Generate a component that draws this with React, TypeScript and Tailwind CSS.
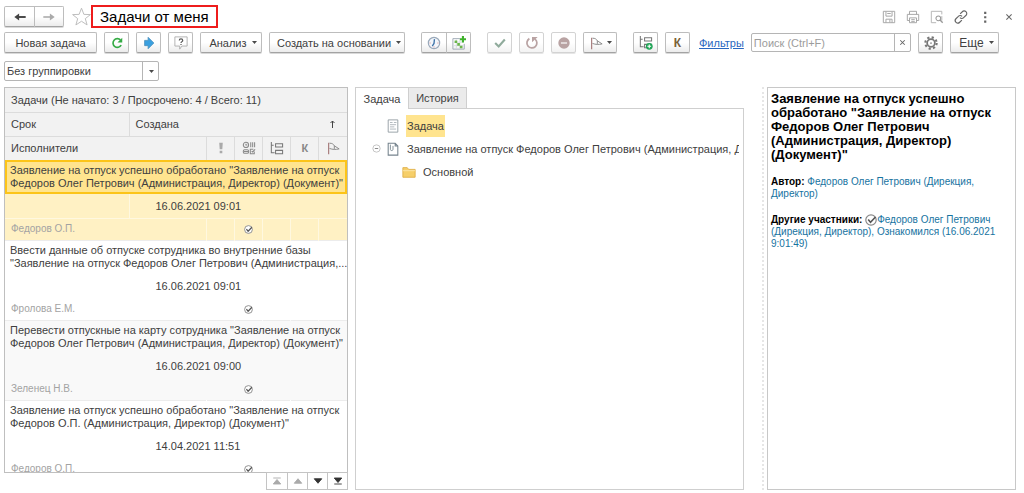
import type { ReactNode } from "react";

const BTN =
  "h-[21px] shrink-0 flex items-center justify-center rounded-[2px] border border-[#bdbdbd] border-b-[#a3a3a3] bg-gradient-to-b from-white from-50% to-[#ececec] shadow-[0_1px_0_#d9d9d9]";
const BTN_OFF =
  "h-[21px] w-[25px] shrink-0 flex items-center justify-center rounded-[2px] border border-[#d3d3d3] bg-gradient-to-b from-white from-50% to-[#f3f3f3] shadow-[0_1px_0_#e6e6e6]";

const TASKS = [
  {
    title: 'Заявление на отпуск успешно обработано "Заявление на отпуск\nФедоров Олег Петрович (Администрация, Директор) (Документ)"',
    created: "16.06.2021 09:01",
    who: "Федоров О.П.",
  },
  {
    title: 'Ввести данные об отпуске сотрудника во внутренние базы\n"Заявление на отпуск Федоров Олег Петрович (Администрация,...',
    created: "16.06.2021 09:01",
    who: "Фролова Е.М.",
  },
  {
    title: 'Перевести отпускные на карту сотрудника "Заявление на отпуск\nФедоров Олег Петрович (Администрация, Директор) (Документ)"',
    created: "16.06.2021 09:00",
    who: "Зеленец Н.В.",
  },
  {
    title: 'Заявление на отпуск успешно обработано "Заявление на отпуск\nФедоров О.П. (Администрация, Директор) (Документ)"',
    created: "14.04.2021 11:51",
    who: "Федоров О.П.",
  },
];

function Icon({ size = 16, children }: { size?: number; children: ReactNode }) {
  return (
    <svg width={size} height={size} viewBox="0 0 16 16" fill="none" className="shrink-0" aria-hidden="true">
      {children}
    </svg>
  );
}

function Caret() {
  return (
    <svg width="5" height="3" viewBox="0 0 5 3" className="shrink-0" aria-hidden="true">
      <path d="M0 0h5L2.5 3z" fill="#4a4a4a" />
    </svg>
  );
}

function Flag() {
  return (
    <Icon size={14}>
      <path d="M3 2v13" stroke="#a98080" strokeWidth="1.4" />
      <path d="M4 2.5c3 0 4.500 1 5.500 3L15 9c-4 1-7.500.8-11-.5M9.500 5.500V9" stroke="#888" strokeWidth="1.1" />
    </Icon>
  );
}

function Tree({ plus = false }: { plus?: boolean }) {
  return (
    <Icon size={15}>
      <path d="M2.5 1v11.500H6M2.5 4.500H5" stroke="#777" strokeWidth="1.1" />
      <path d="M7 3h7.500v3.500H7zM7 10h7.500v3.500H7z" stroke="#777" strokeWidth="1.1" />
      {plus && (
        <>
          <circle cx="12" cy="12" r="3.600" fill="#1fa556" />
          <path d="M12 10v4M10 12h4" stroke="#fff" strokeWidth="1.2" />
        </>
      )}
    </Icon>
  );
}

function Done({ size = 9 }: { size?: number }) {
  return (
    <svg width={size} height={size} viewBox="0 0 12 12" fill="none" className="inline-block" role="img" aria-label="Выполнено">
      <circle cx="6" cy="6" r="5.2" stroke="#888" strokeWidth="1.2" fill="#fff" />
      <path d="M3.200 5.500l2.300 2.800L10.500 3" stroke="#555" strokeWidth="1.6" />
    </svg>
  );
}

function TitleBar() {
  return (
    <header className="flex items-center h-[23px] pr-2">
      <div className="flex">
        <button className={`${BTN} w-[31px] rounded-r-none`} aria-label="Назад">
          <Icon size={14}>
            <path d="M14.500 8H5" stroke="#444" strokeWidth="2.2" />
            <path d="M1.500 8l5.500-4v8z" fill="#444" />
          </Icon>
        </button>
        <button className={`${BTN} w-[30px] -ml-px rounded-l-none`} aria-label="Вперед">
          <Icon size={14}>
            <path d="M1.500 8H11" stroke="#aaa" strokeWidth="1.8" />
            <path d="M14.500 8L9 4v8z" fill="#aaa" />
          </Icon>
        </button>
      </div>
      <button className="ml-2 w-[19px]" aria-label="В избранное">
        <Icon size={19}>
          <path d="M8 1l2 5.200 5.500.2-4.300 3.400 1.500 5.300L8 12l-4.700 3.100 1.500-5.300L.5 6.400 6 6.200z" stroke="#bbb" strokeWidth=".8" />
        </Icon>
      </button>
      <h1 className="h-[23px] border-2 border-[#ee1c1c] px-[7px] text-[15px] leading-[19px] text-black whitespace-nowrap">
        Задачи от меня
      </h1>
      <div className="ml-auto flex items-center gap-[10px]">
        <button aria-label="Сохранить">
          <Icon size={14}>
            <path d="M1.500 1.500h13v13h-13zM4.500 2v5h7V2M4.500 14.500v-4h7v4M9 11v3M6 4h4" stroke="#a5a5a5" strokeWidth="1.1" />
          </Icon>
        </button>
        <button aria-label="Печать">
          <Icon size={14}>
            <path d="M4 5V1.500h8V5M4 12H1.500V5h13v7H12M4 9h8v5.500H4zM6 11h4M6 13h4" stroke="#a5a5a5" strokeWidth="1.1" />
          </Icon>
        </button>
        <button aria-label="Просмотр">
          <Icon size={14}>
            <path d="M7 14.500H1.500v-13h12V5M13.500 7v5" stroke="#b5b5b5" strokeWidth="1.1" />
            <circle cx="9.500" cy="9.500" r="2.700" stroke="#999" strokeWidth="1.2" />
            <path d="M11.500 11.500l3 3" stroke="#999" strokeWidth="1.5" />
          </Icon>
        </button>
        <button aria-label="Ссылка">
          <Icon size={14}>
            <path
              d="M7 4.500l2.500-2.500a2.800 2.800 0 0 1 4.300 4L11 8.800a2.800 2.800 0 0 1-4.200 0M9 11.500L6.500 14a2.800 2.800 0 0 1-4.300-4L5 7.200a2.800 2.800 0 0 1 4.200 0"
              stroke="#666"
              strokeWidth="1.3"
            />
          </Icon>
        </button>
        <button aria-label="Меню">
          <Icon size={14}>
            <path d="M7 2h2.500v2.500H7zM7 7h2.500v2.500H7zM7 12h2.500v2.500H7z" fill="#666" />
          </Icon>
        </button>
        <button aria-label="Закрыть">
          <Icon size={14}>
            <path d="M5 5l6 6M11 5l-6 6" stroke="#666" strokeWidth="1.2" />
          </Icon>
        </button>
      </div>
    </header>
  );
}

function Toolbar() {
  return (
    <div className="mt-1 flex items-center gap-[7px] pr-[25px]" role="toolbar">
      <button className={`${BTN} w-[93px]`}>Новая задача</button>
      <button className={`${BTN} w-[25px]`} aria-label="Обновить">
        <Icon size={14}>
          <path d="M12 4.500A5 5 0 1 0 12.800 10.500" stroke="#35ab45" strokeWidth="1.9" />
          <path d="M14 2v5.500H8.500z" fill="#35ab45" />
        </Icon>
      </button>
      <button className={`${BTN} w-[25px]`} aria-label="Перейти">
        <Icon size={14}>
          <path d="M3 5h4V1.500L13.500 8 7 14.500V11H3z" fill="#3aa0e0" stroke="#4f93c0" />
        </Icon>
      </button>
      <button className={`${BTN} w-[25px]`} aria-label="Справка">
        <Icon size={14}>
          <path d="M1 1h14v10.500H9L6.500 15v-3.500H1z" stroke="#aaa" />
          <path d="M6 5c0-2.300 4-2.300 4 0 0 1.500-2 1.300-2 3M8 9v1.300" stroke="#555" strokeWidth="1.3" />
        </Icon>
      </button>
      <button className={`${BTN} w-[62px] gap-[5px] pl-1`}>
        Анализ <Caret />
      </button>
      <button className={`${BTN} w-[136px] gap-[5px] pl-1`}>
        Создать на основании <Caret />
      </button>
      <div className="ml-[9px] flex">
        <button className={`${BTN} w-[26px] rounded-r-none`} aria-label="Срок">
          <Icon size={14}>
            <circle cx="8" cy="8" r="6.500" fill="#f2f6fb" stroke="#9aa9ba" strokeWidth="1.3" />
            <path d="M8.500 3.500L8 8.500 6 11.500" stroke="#3d72a8" strokeWidth="1.5" />
            <path d="M3 8h1M12 8h1M8 12v1" stroke="#c66" />
          </Icon>
        </button>
        <button className={`${BTN} -ml-px w-[25px] rounded-l-none`} aria-label="Добавить в план">
          <Icon size={14}>
            <path d="M9 3H1v12h13V9" stroke="#98a4b0" />
            <path d="M2 7h11M2 11h11M5 4v10M9 4v10" stroke="#ccd4db" strokeWidth=".8" />
            <path d="M3 5h3v3H3zM6 8h3v3H6zM9 11h3v3H9z" fill="#6bb54a" />
            <path d="M12.500 0v7.500M9 3.700h7" stroke="#3fb22c" strokeWidth="2.4" />
          </Icon>
        </button>
      </div>
      <button className={`${BTN_OFF} ml-[9px]`} aria-label="Выполнить" disabled>
        <Icon size={14}>
          <path d="M2.500 8l4 4 7-8" stroke="#90ab9c" strokeWidth="2.4" />
        </Icon>
      </button>
      <button className={BTN_OFF} aria-label="Вернуть" disabled>
        <Icon size={14}>
          <path d="M5 3A5.700 5.700 0 1 0 11.500 3.500" stroke="#b9a3a3" strokeWidth="2" />
          <path d="M8 1h6.500L8 7z" fill="#b9a3a3" />
        </Icon>
      </button>
      <button className={BTN_OFF} aria-label="Отменить" disabled>
        <Icon size={14}>
          <circle cx="8" cy="8" r="6.500" fill="#b9a3a3" />
          <path d="M4.500 8h7" stroke="#e7dfdf" strokeWidth="2" />
        </Icon>
      </button>
      <button className={`${BTN} w-[34px] gap-1`} aria-label="Флаг">
        <Flag />
        <Caret />
      </button>
      <button className={`${BTN} ml-[9px] w-[25px]`} aria-label="Добавить подзадачу">
        <Tree plus />
      </button>
      <button className={`${BTN} w-[25px] text-xs font-bold text-[#7a6238]`}>К</button>
      <a href="#filters" className="ml-[2px] whitespace-nowrap text-[#2a68c0] underline">
        Фильтры
      </a>
      <div className="flex h-[19px] min-w-0 flex-1 rounded-[2px] border border-[#b5b5b5] bg-white">
        <input
          className="min-w-0 flex-1 px-[2px] outline-none placeholder:text-[#9c9c9c]"
          aria-label="Поиск"
          placeholder="Поиск (Ctrl+F)"
        />
        <button className="flex w-4 items-center justify-center border-l border-[#b5b5b5]" aria-label="Очистить">
          <Icon size={9}>
            <path d="M4 4l8 8M12 4l-8 8" stroke="#666" strokeWidth="1.8" />
          </Icon>
        </button>
      </div>
      <button className={`${BTN} w-[25px]`} aria-label="Настройки">
        <Icon size={14}>
          <circle cx="8" cy="8" r="6.500" stroke="#777" strokeWidth="2.4" strokeDasharray="2.500 2.600" />
          <circle cx="8" cy="8" r="4.400" stroke="#777" strokeWidth="2" />
          <circle cx="8" cy="8" r="1" fill="#888" />
        </Icon>
      </button>
      <button className={`${BTN} w-[49px] gap-[5px] pl-1 text-xs`}>
        Еще <Caret />
      </button>
    </div>
  );
}

function TaskTable() {
  return (
    <table className="w-full table-fixed border-collapse text-left">
      <colgroup>
        <col className="w-[124px]" />
        <col />
        <col className="w-7" />
        <col className="w-7" />
        <col className="w-7" />
        <col className="w-7" />
        <col className="w-7" />
      </colgroup>
      <thead className="bg-[#f2f2f2] [&_th]:h-6 [&_th]:border [&_th]:border-[#dcdcdc] [&_th]:p-0 [&_th]:font-normal [&_tr>*:first-child]:border-l-0 [&_tr>*:first-child]:pl-[6px] [&_tr>*:last-child]:border-r-0 [&_tr:first-child>th]:border-t-0">
        <tr>
          <th colSpan={7}>Задачи (Не начато: 3 / Просрочено: 4 / Всего: 11)</th>
        </tr>
        <tr>
          <th>Срок</th>
          <th colSpan={6}>
            <span className="flex justify-between pl-[6px] pr-3">
              Создана
              <svg width="5" height="9" viewBox="0 0 5 9" fill="none" className="mt-[3px]" aria-hidden="true">
                <path d="M2.500 8V1M.5 3l2-2 2 2" stroke="#444" />
              </svg>
            </span>
          </th>
        </tr>
        <tr>
          <th colSpan={2}>Исполнители</th>
          <th aria-label="Важность">
            <span className="flex justify-center">
              <Icon size={14}>
                <path d="M6 2h4L9.500 9.500h-3zM6.500 11h3v3h-3z" fill="#aaa" />
              </Icon>
            </span>
          </th>
          <th aria-label="Состояние">
            <span className="flex justify-center">
              <Icon size={14}>
                <g stroke="#8a8a8a" strokeWidth="1.2">
                  <circle cx="4.500" cy="4.500" r="3" />
                  <path d="M4.500 3v1.500h1.500M10 1.500v5.500M12.200 1.500v5.500M14.400 1.500v5.500" />
                  <rect x="1.500" y="10" width="6" height="4" rx="1.500" />
                  <path d="M2 12h5M14 12v2.500H9.500V9.500H13M11 11.500l1 1 3-3" />
                </g>
              </Icon>
            </span>
          </th>
          <th aria-label="Подзадачи">
            <span className="flex justify-center">
              <Tree />
            </span>
          </th>
          <th>
            <b className="block text-center text-[#888]">К</b>
          </th>
          <th aria-label="Флаг">
            <span className="flex justify-center">
              <Flag />
            </span>
          </th>
        </tr>
      </thead>
      {TASKS.map((task, i) => {
        const selected = i === 0;
        const line = selected ? "border-[#fff8e0]" : "border-transparent";
        return (
          <tbody
            key={i}
            className={`border-b border-[#ececec] ${selected ? "bg-[#fff1c4]" : i % 2 ? "bg-white" : "bg-[#f9f9f9]"}`}
          >
            <tr>
              <td
                colSpan={7}
                className={`h-[34px] p-0 ${selected ? "bg-[#ffe48f] outline-2 -outline-offset-2 outline-[#fcc419]" : ""}`}
              >
                <div className="pl-[5px] whitespace-pre leading-[13px]">{task.title}</div>
              </td>
            </tr>
            <tr>
              <td className={`h-6 border-r p-0 ${line}`} />
              <td colSpan={6} className="p-0 pl-[26px]">
                {task.created}
              </td>
            </tr>
            <tr className={`border-t ${line}`}>
              <td colSpan={2} className={`h-[22px] border-r p-0 pl-[6px] text-[10px] text-[#a3a3a3] ${line}`}>
                {task.who}
              </td>
              <td className={`border-r p-0 ${line}`} />
              <td className={`border-r p-0 text-center leading-none ${line}`}>
                <Done />
              </td>
              <td className={`border-r p-0 ${line}`} />
              <td className={`border-r p-0 ${line}`} />
              <td className="p-0" />
            </tr>
          </tbody>
        );
      })}
    </table>
  );
}

const PAGER = [
  { label: "В начало", d: "M3 4h10M8 6l5 6H3z", off: true },
  { label: "Вверх", d: "M8 5l5 6H3z", off: true },
  { label: "Вниз", d: "M3 5h10l-5 6z", off: false },
  { label: "В конец", d: "M3 4h10l-5 6zM3 12h10", off: false },
];

function Details() {
  return (
    <aside className="border border-[#c8c8c8] px-[3px] py-1 text-black">
      <h2 className="text-[13px] font-bold leading-[14px]">
        Заявление на отпуск успешно обработано "Заявление на отпуск Федоров Олег Петрович (Администрация, Директор)
        (Документ)"
      </h2>
      <p className="mt-[14px] text-[10px] leading-[12px]">
        <b>Автор:</b>{" "}
        <a href="#author" className="text-[#16739f]">
          Федоров Олег Петрович (Дирекция, Директор)
        </a>
      </p>
      <p className="mt-[14px] text-[10px] leading-[12px]">
        <b>Другие участники:</b> <Done size={12} />
        <a href="#member" className="text-[#16739f]">
          Федоров Олег Петрович (Дирекция, Директор), Ознакомился (16.06.2021 9:01:49)
        </a>
      </p>
    </aside>
  );
}

export default function App() {
  return (
    <div className="flex h-screen flex-col overflow-hidden bg-white pb-[3px] pl-1 pt-[5px] font-['Liberation_Sans',Arial,sans-serif] text-[11px] leading-[14px] text-[#404040]">
      <TitleBar />
      <Toolbar />
      <div className="relative mt-2 h-5 w-[155px] shrink-0">
        <select
          aria-label="Группировка"
          className="h-full w-full appearance-none rounded-[2px] border border-[#b5b5b5] pl-[2px] outline-none"
        >
          <option>Без группировки</option>
        </select>
        <span className="pointer-events-none absolute inset-y-0 right-0 flex w-[17px] items-center justify-center border-l border-[#b5b5b5]">
          <Caret />
        </span>
      </div>
      <main className="mt-[6px] grid min-h-0 flex-1 grid-cols-[minmax(0,344fr)_minmax(0,389fr)_minmax(0,265fr)] gap-x-[7px] pr-2">
        <section className="flex min-h-0 flex-col">
          <div className="min-h-0 flex-1 overflow-hidden border border-[#bfbfbf]">
            <TaskTable />
          </div>
          <div className="-mt-px flex self-end border border-[#c4c4c4] bg-white">
            {PAGER.map((p) => (
              <button
                key={p.label}
                aria-label={p.label}
                disabled={p.off}
                className="flex h-4 w-5 items-center justify-center border-l border-[#c4c4c4] first:border-l-0"
              >
                <Icon size={12}>
                  <path d={p.d} fill={p.off ? "#aaa" : "#333"} stroke={p.off ? "#aaa" : "#333"} strokeWidth="1.2" />
                </Icon>
              </button>
            ))}
          </div>
        </section>

        <section className="flex min-h-0 flex-col">
          <div className="flex" role="tablist">
            <button role="tab" aria-selected="true" className="z-10 -mb-px h-[22px] w-[54px] border border-b-0 border-[#cfcfcf] bg-white">
              Задача
            </button>
            <button role="tab" aria-selected="false" className="-ml-px h-[21px] w-[59px] border border-b-0 border-[#cfcfcf] bg-[#ebebeb]">
              История
            </button>
          </div>
          <ul className="flex-1 border border-[#cfcfcf] pl-4 pr-1 pt-[5px]">
            <li className="flex h-[23px] items-center pl-[14px]">
              <Icon size={14}>
                <path d="M2.500 1h11v14h-11z" stroke="#8f999f" />
                <path d="M4.500 4h3M9 4h3M4.500 6.500h7M4.500 9h5M4.500 11.500h7" stroke="#a9b1b6" />
              </Icon>
              <span className="ml-[6px] bg-[#ffe48f] px-[1px] leading-[22px]">Задача</span>
            </li>
            <li className="flex h-[23px] items-center">
              <button aria-label="Свернуть" className="w-[14px] shrink-0">
                <Icon size={9}>
                  <circle cx="8" cy="8" r="6.500" stroke="#bbb" strokeWidth="1.5" />
                  <path d="M5 8h6" stroke="#777" strokeWidth="1.5" />
                </Icon>
              </button>
              <Icon size={14}>
                <path d="M2.500 1.500h8l3 3v10.500h-11zM10.500 1.500v3h3" stroke="#75838d" strokeWidth="1.2" />
                <path d="M5 3v5.500c0 1.700 3 1.700 3 0V4.500" stroke="#75838d" />
              </Icon>
              <span className="ml-[7px] overflow-hidden whitespace-nowrap">
                Заявление на отпуск Федоров Олег Петрович (Администрация, Директор) (Документ)
              </span>
            </li>
            <li className="flex h-[23px] items-center pl-[30px]">
              <Icon size={14}>
                <path d="M1 3h5l1.500 2H15v9H1z" fill="#f6cf6a" stroke="#dfae45" />
                <path d="M1 6.500h14" stroke="#fbe7ae" />
              </Icon>
              <span className="ml-[7px]">Основной</span>
            </li>
          </ul>
        </section>

        <div className="grid grid-cols-[13px_minmax(0,1fr)]">
          <div className="border-r-2 border-dotted border-[#e6e6e6]" />
          <div className="ml-[3px] grid">
            <Details />
          </div>
        </div>
      </main>
    </div>
  );
}
